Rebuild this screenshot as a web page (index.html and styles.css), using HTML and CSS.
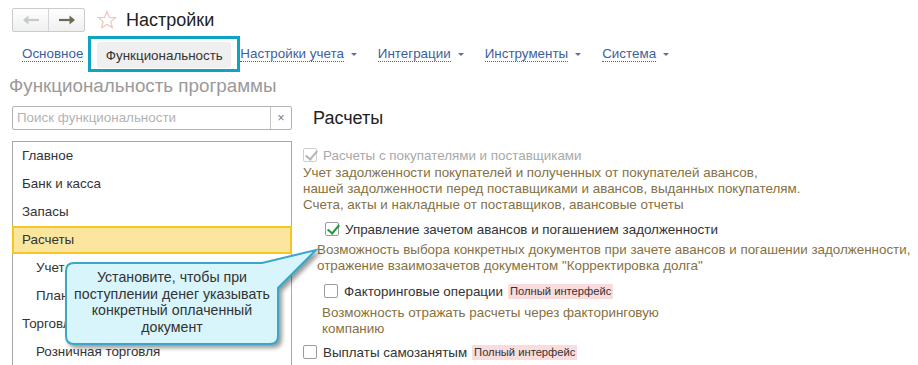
FILE: index.html
```html
<!DOCTYPE html>
<html lang="ru">

<head>
    <meta charset="UTF-8">
    <title>Настройки</title>
    <link rel="stylesheet" href="styles.css">
</head>

<body>
    <!-- шапка: навигация и заголовок -->
    <div class="top-bar">
        <div class="nav-buttons">
            <span class="nav-btn">
                <svg width="18" height="10" viewBox="0 0 18 10"><path d="M2 5 H17" stroke="#c3cccc" stroke-width="2.2"/><path d="M1 5 L6.5 0.5 V9.5 Z" fill="#c3cccc"/></svg>
            </span>
            <span class="nav-btn">
                <svg width="18" height="10" viewBox="0 0 18 10"><path d="M1 5 H16" stroke="#6e6a52" stroke-width="2.2"/><path d="M17 5 L11.5 0.5 V9.5 Z" fill="#6e6a52"/></svg>
            </span>
        </div>
        <svg class="star" width="20" height="20" viewBox="0 0 20 20"><path d="M10 1.5 L12.4 7.3 L18.6 7.6 L13.8 11.6 L15.4 17.8 L10 14.4 L4.6 17.8 L6.2 11.6 L1.4 7.6 L7.6 7.3 Z" fill="none" stroke="#f0c6bd" stroke-width="1.2"/></svg>
        <h1 class="page-title">Настройки</h1>
    </div>

    <!-- вкладки -->
    <div class="tabs">
        <a class="tab-link" href="javascript:">Основное</a>
        <div class="tab-active"><span>Функциональность</span></div>
        <a class="tab-link" href="javascript:">Настройки учета</a><span class="caret"></span>
        <a class="tab-link" href="javascript:">Интеграции</a><span class="caret"></span>
        <a class="tab-link" href="javascript:">Инструменты</a><span class="caret"></span>
        <a class="tab-link" href="javascript:">Система</a><span class="caret"></span>
    </div>

    <div class="section-title">Функциональность программы</div>

    <div class="main">
        <!-- левая колонка: поиск и список разделов -->
        <div class="sidebar">
            <div class="search">
                <span class="search-text">Поиск функциональности</span>
                <span class="search-clear">×</span>
            </div>
            <ul class="section-list">
                <li>Главное</li>
                <li>Банк и касса</li>
                <li>Запасы</li>
                <li class="selected">Расчеты</li>
                <li class="sub">Учет</li>
                <li class="sub">План</li>
                <li>Торговля</li>
                <li class="sub">Розничная торговля</li>
            </ul>
        </div>

        <!-- правая колонка: настройки раздела -->
        <div class="content">
            <h2 class="content-title">Расчеты</h2>

            <div class="option disabled">
                <span class="check checked"></span>
                <span>Расчеты с покупателями и поставщиками</span>
            </div>
            <div class="desc">Учет задолженности покупателей и полученных от покупателей авансов,<br>нашей задолженности перед поставщиками и авансов, выданных покупателям.<br>Счета, акты и накладные от поставщиков, авансовые отчеты</div>

            <div class="option option-1">
                <span class="check checked"></span>
                <span>Управление зачетом авансов и погашением задолженности</span>
            </div>
            <div class="desc desc-1">Возможность выбора конкретных документов при зачете авансов и погашении задолженности,<br>отражение взаимозачетов документом "Корректировка долга"</div>

            <div class="option option-2">
                <span class="check"></span>
                <span>Факторинговые операции</span>
                <span class="badge">Полный интерфейс</span>
            </div>
            <div class="desc desc-2">Возможность отражать расчеты через факторинговую<br>компанию</div>

            <div class="option option-3">
                <span class="check"></span>
                <span>Выплаты самозанятым</span>
                <span class="badge">Полный интерфейс</span>
            </div>
        </div>
    </div>

    <!-- подсказка поверх содержимого -->
    <svg class="callout-shape" width="262" height="112" viewBox="0 0 262 112">
        <path d="M14 19 H202 L256 6 L218 44 V92 Q218 100 210 100 H14 Q6 100 6 92 V27 Q6 19 14 19 Z" fill="#d9f5fc" stroke="#3aa7c8" stroke-width="2"/>
    </svg>
    <div class="callout-text">Установите, чтобы при поступлении денег указывать конкретный оплаченный документ</div>
</body>

</html>
```

FILE: styles.css
```css
* {
    margin: 0;
    padding: 0;
    box-sizing: border-box;
}

body {
    width: 918px;
    height: 365px;
    overflow: hidden;
    background: #ffffff;
    font-family: "Liberation Sans", Arial, sans-serif;
    font-size: 13.4px;
    color: #333333;
    position: relative;
}

ul {
    list-style: none;
}

/* шапка */
.top-bar {
    display: flex;
    align-items: flex-start;
    height: 36px;
    padding: 8px 0 0 12px;
}

.nav-buttons {
    display: flex;
    width: 73px;
    height: 24px;
    border: 1px solid #cbcbcb;
    border-radius: 2px;
    background: linear-gradient(#ffffff, #efefef);
}

.nav-btn {
    flex: 1;
    display: flex;
    align-items: center;
    justify-content: center;
}

.nav-btn + .nav-btn {
    border-left: 1px solid #d4d4d4;
}

.star {
    margin: 2px 0 0 12px;
}

.page-title {
    margin-left: 9px;
    font-size: 18px;
    font-weight: normal;
    line-height: 24px;
    color: #222222;
}

/* вкладки */
.tabs {
    display: flex;
    align-items: center;
    height: 36px;
    padding-left: 22px;
}

.tab-link {
    color: #3d5f9e;
    text-decoration: none;
    border-bottom: 1px dotted #3b68c0;
    line-height: 14px;
}

.caret {
    width: 0;
    height: 0;
    margin: 1px 21px 0 7px;
    border-left: 3px solid transparent;
    border-right: 3px solid transparent;
    border-top: 3px solid #5c6f96;
}

.tab-active {
    width: 152px;
    height: 36px;
    margin: 0 0 0 5px;
    border: 3px solid #0da3c3;
    padding: 3px 6px;
}

.tab-active span {
    display: flex;
    align-items: center;
    justify-content: center;
    height: 26px;
    background: #efefef;
    border-radius: 3px;
    color: #333333;
}

.section-title {
    height: 34px;
    padding: 3px 0 0 9px;
    font-size: 18.8px;
    color: #9a9a9a;
}

/* колонки */
.main {
    display: flex;
}

.sidebar {
    width: 292px;
    padding-left: 12px;
}

.search {
    display: flex;
    height: 24px;
    border: 1px solid #b3b3b3;
    border-radius: 2px;
}

.search-text {
    flex: 1;
    padding-left: 4px;
    line-height: 22px;
    color: #b3b3b3;
}

.search-clear {
    width: 21px;
    border-left: 1px solid #c4c4c4;
    text-align: center;
    line-height: 22px;
    font-size: 12px;
    color: #777777;
}

.section-list {
    margin-top: 11px;
    height: 240px;
    border: 1px solid #a8a8a8;
    border-bottom: none;
}

.section-list li {
    height: 28px;
    line-height: 28px;
    padding-left: 9px;
}

.section-list li.sub {
    padding-left: 23px;
}

.section-list li.selected {
    background: #fbe6a0;
    border: 2px solid #f6c622;
    line-height: 24px;
    margin: 0 -1px;
    padding-left: 8px;
}

/* правая часть */
.content {
    padding-left: 11px;
}

.content-title {
    height: 24px;
    padding-left: 10px;
    font-size: 18px;
    font-weight: normal;
    color: #222222;
    line-height: 24px;
}

.option {
    display: flex;
    align-items: center;
    height: 18px;
    margin-top: 16px;
}

.option-1 {
    margin-top: 7px;
    padding-left: 22px;
}

.option-2 {
    margin-top: 8px;
    padding-left: 21px;
}

.option-3 {
    margin-top: 6px;
}

.check {
    position: relative;
    width: 14px;
    height: 14px;
    margin-right: 6px;
    border: 1px solid #9c9c9c;
    border-radius: 2px;
    background: #ffffff;
}

.check.checked::after {
    content: "";
    position: absolute;
    left: 4px;
    top: -1px;
    width: 5px;
    height: 10px;
    border-right: 2.5px solid #1c9a3c;
    border-bottom: 2.5px solid #1c9a3c;
    transform: rotate(40deg);
}

.disabled {
    color: #a9a9a9;
}

.disabled .check {
    border-color: #cfcfcf;
}

.disabled .check.checked::after {
    border-color: #b6b6b6;
}

.desc {
    margin-top: 1px;
    line-height: 16px;
    color: #86713f;
}

.desc-1 {
    margin-top: 4px;
    padding-left: 14px;
}

.desc-2 {
    margin-top: 5px;
    padding-left: 19px;
}

.badge {
    margin-left: 5px;
    padding: 1px 2px;
    background: #fadcdc;
    font-size: 11.2px;
    color: #333333;
    line-height: 13px;
}

/* подсказка */
.callout-shape {
    position: absolute;
    left: 60px;
    top: 244px;
    filter: drop-shadow(3px 3px 2px rgba(0, 0, 0, .4));
}

.callout-text {
    position: absolute;
    left: 66px;
    top: 269px;
    width: 212px;
    text-align: center;
    font-size: 14.2px;
    line-height: 16.5px;
    color: #333333;
}
```
